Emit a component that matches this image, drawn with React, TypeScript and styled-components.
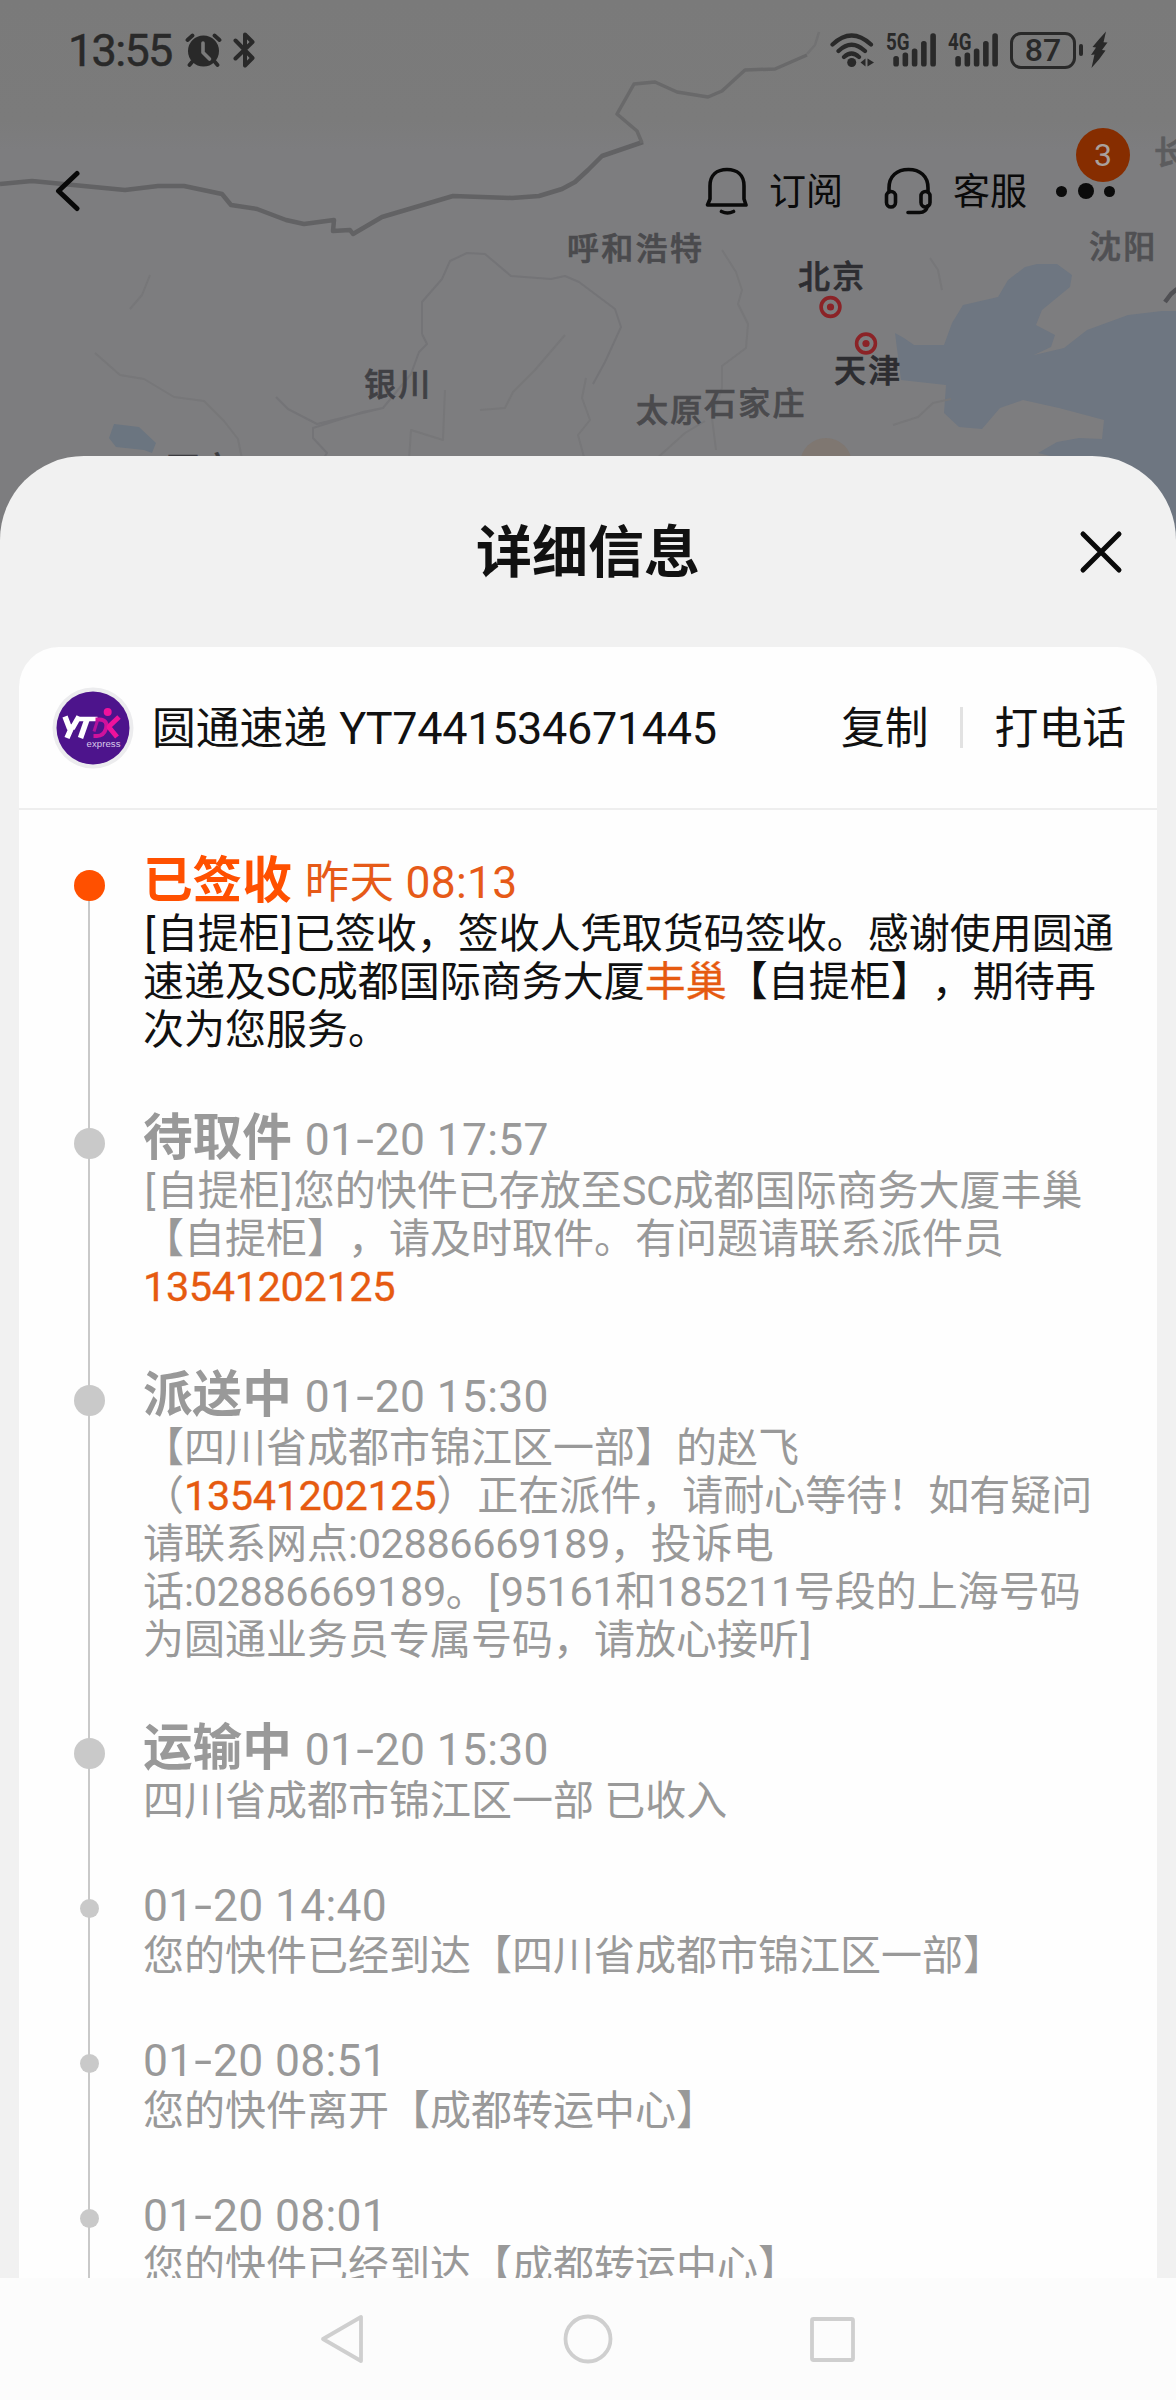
import React from "react";
import styled, { createGlobalStyle } from "styled-components";

const Global = createGlobalStyle`
  * { box-sizing: border-box; }
  html, body { margin: 0; padding: 0; background: #f1f1f1; }
  body {
    font-family: Roboto, "Noto Sans CJK SC", sans-serif;
    text-spacing-trim: space-all;
    text-autospace: no-autospace;
    font-kerning: none;
  }
`;

const Screen = styled.div`
  position: relative;
  display: flex;
  flex-direction: column;
  width: 1176px;
  height: 2400px;
  overflow: hidden;
  background: #7d7d7f;
`;

/* ---------- map backdrop ---------- */

const MapCanvas = styled.div`
  position: absolute;
  top: 0;
  left: 0;
  width: 1176px;
  height: 560px;
  overflow: hidden;
  background: linear-gradient(#7a7a7a 0, #7b7b7b 120px, #7d7d7f 150px);
`;

const MapArt = styled.svg`
  display: block;
`;

const City = styled.span<{ $x: number; $y: number; $color?: string }>`
  position: absolute;
  left: ${(p) => p.$x}px;
  top: ${(p) => p.$y - 20}px;
  line-height: 40px;
  font-size: 32px;
  letter-spacing: 2.3px;
  font-weight: 500;
  -webkit-text-stroke: 0.7px currentColor;
  white-space: nowrap;
  color: ${(p) => p.$color ?? "#4a4a4d"};
`;

/* ---------- status bar ---------- */

const StatusBar = styled.div`
  position: relative;
  display: flex;
  align-items: center;
  justify-content: space-between;
  height: 100px;
  padding: 0 66px 0 68px;
  color: #292929;
`;

const StatusGroup = styled.div<{ $gap: number }>`
  display: flex;
  align-items: center;
  gap: ${(p) => p.$gap}px;
`;

const Clock = styled.span`
  font-size: 45px;
  line-height: 50px;
  letter-spacing: -1.7px;
  margin: 2px 2px 0 0;
  -webkit-text-stroke: 0.5px currentColor;
`;

const Signal = styled.div`
  position: relative;
  width: 50px;
  height: 34px;
`;

const SignalLabel = styled.span`
  position: absolute;
  left: 0;
  top: -3px;
  font-size: 24px;
  line-height: 24px;
  font-weight: 700;
  transform: scaleX(0.78);
  transform-origin: left;
`;

const Battery = styled.div`
  display: flex;
  align-items: center;
  justify-content: center;
  width: 66px;
  height: 37px;
  border: 3px solid #292929;
  border-radius: 11px;
  font-size: 32px;
  line-height: 32px;
  font-weight: 500;
`;

const BatteryTip = styled.div`
  width: 4px;
  height: 12px;
  border-radius: 2px;
  background: #292929;
`;

/* ---------- app bar ---------- */

const AppBar = styled.div`
  position: relative;
  display: flex;
  align-items: center;
  height: 182px;
  padding: 0 61px 0 54px;
`;

const Spacer = styled.div`
  flex: 1;
`;

const BarLabel = styled.span<{ $right: number }>`
  margin: 3px ${(p) => p.$right}px 0 21px;
  font-size: 37px;
  line-height: 50px;
  color: #0a0a0a;
`;

const MoreButton = styled.div`
  position: relative;
  display: flex;
  align-items: center;
  justify-content: space-between;
  width: 59px;
`;

const MoreDot = styled.i<{ $d: number }>`
  width: ${(p) => p.$d}px;
  height: ${(p) => p.$d}px;
  border-radius: 50%;
  background: #0b0b0b;
`;

const Badge = styled.span`
  position: absolute;
  left: 20px;
  bottom: 17px;
  width: 54px;
  height: 54px;
  border-radius: 50%;
  background: #862d00;
  color: #a9a19d;
  font-size: 32px;
  line-height: 54px;
  text-align: center;
`;

/* ---------- sheet ---------- */

const Sheet = styled.section`
  position: relative;
  flex: 1;
  display: flex;
  flex-direction: column;
  min-height: 0;
  margin-top: 174px;
  padding: 0 19px;
  border-radius: 84px 84px 0 0;
  background: #f1f1f1;
`;

const SheetHeader = styled.header`
  display: grid;
  grid-template-columns: 1fr auto 1fr;
  align-items: center;
  flex: none;
  height: 191px;
  padding-right: 34px;
`;

const SheetTitle = styled.h1`
  grid-column: 2;
  margin: 3px 0 0 34px;
  font-size: 56px;
  line-height: 70px;
  font-weight: 700;
  color: #111;
`;

const CloseIcon = styled.svg`
  justify-self: end;
`;

const Card = styled.div`
  flex: 1;
  min-height: 0;
  overflow: hidden;
  border-radius: 40px 40px 0 0;
  background: #fefefe;
`;

const Courier = styled.div`
  display: flex;
  align-items: center;
  height: 163px;
  padding: 0 31px 0 33px;
  border-bottom: 2px solid #eee;
  font-size: 43.8px;
  line-height: 60px;
  color: #111;
`;

const CourierName = styled.span`
  margin: 3px 0 0 18px;
`;

const TrackingNo = styled.span`
  margin: 3px 0 0 12px;
  font-size: 45px;
  letter-spacing: -0.35px;
`;

const Action = styled.span`
  margin-top: 3px;
`;

const Divider = styled.i`
  width: 3px;
  height: 41px;
  margin: 0 32px 0 31px;
  background: #e2e2e2;
`;

/* ---------- timeline ---------- */

const Timeline = styled.ol`
  list-style: none;
  margin: 0;
  padding: 34px 0 0 54px;
`;

const Event = styled.li`
  display: flex;
`;

const Rail = styled.div<{ $first?: boolean }>`
  display: flex;
  flex-direction: column;
  align-items: center;
  flex: none;
  width: 33px;
  margin-right: 37px;
  background: linear-gradient(#c9c9c9, #c9c9c9) 15px ${(p) => (p.$first ? "42px" : "0")} / 2px 100% no-repeat;
`;

const Dot = styled.i<{ $big: boolean; $active?: boolean }>`
  width: ${(p) => (p.$big ? 31 : 19)}px;
  height: ${(p) => (p.$big ? 31 : 19)}px;
  margin-top: ${(p) => (p.$active ? 26 : 27)}px;
  border-radius: 50%;
  background: ${(p) => (p.$active ? "#ff5000" : "#c9c9c9")};
`;

const EventBody = styled.div<{ $active?: boolean }>`
  padding-bottom: 47px;
  color: ${(p) => (p.$active ? "#111" : "#999")};
`;

const EventHead = styled.div<{ $big: boolean }>`
  display: flex;
  align-items: baseline;
  height: ${(p) => (p.$big ? 66 : 60)}px;
  line-height: ${(p) => (p.$big ? 74 : 68)}px;
  white-space: nowrap;
`;

const Status = styled.strong<{ $active?: boolean }>`
  margin-right: 13px;
  font-size: 49.6px;
  font-weight: 700;
  color: ${(p) => (p.$active ? "#ff5000" : "#999")};
`;

const Time = styled.time<{ $active?: boolean }>`
  font-size: 44.4px;
  letter-spacing: 0.3px;
  color: ${(p) => (p.$active ? "#e65a18" : "#999")};
`;

const Dash = styled.span`
  display: inline-block;
  transform: scaleX(1.45);
  margin: 0 3.5px;
`;

const Line = styled.p`
  margin: 0;
  height: 48px;
  font-size: 41px;
  line-height: 48px;
  white-space: nowrap;
`;

const Latin = styled.span`
  font-size: 41.5px;
  letter-spacing: -0.4px;
`;

const Bracket = styled.span`
  padding: 0 1.5px;
`;

const Mark = styled.span`
  color: #e65a10;
  -webkit-text-stroke: 0.3px currentColor;
`;

/* ---------- navigation bar ---------- */

const NavBar = styled.nav`
  position: relative;
  display: flex;
  align-items: center;
  justify-content: center;
  gap: 194px;
  flex: none;
  height: 122px;
  background: #fcfcfc;
`;

const NavIcon = styled.svg`
  fill: none;
  stroke: #cfcfcf;
  stroke-width: 3.8;
  stroke-linejoin: round;
`;

/* Splits a run into CJK text, brackets and Latin/digit runs. */
function Run({ text }: { text: string }) {
  return (
    <>
      {text.split(/([A-Za-z0-9:]+|[[\]])/).map((part, i) => {
        if (part === "[" || part === "]") return <Bracket key={i}>{part}</Bracket>;
        if (/^[A-Za-z0-9:]+$/.test(part)) return <Latin key={i}>{part}</Latin>;
        return part;
      })}
    </>
  );
}

/* Text between asterisks is highlighted. */
function RichLine({ text }: { text: string }) {
  return (
    <Line>
      {text.split("*").map((part, i) =>
        i % 2 ? (
          <Mark key={i}>
            <Run text={part} />
          </Mark>
        ) : (
          <Run key={i} text={part} />
        )
      )}
    </Line>
  );
}

function TimeText({ text, active }: { text: string; active?: boolean }) {
  const [before, after] = text.split("-");
  return (
    <Time $active={active}>
      {before}
      {after !== undefined && (
        <>
          <Dash>-</Dash>
          {after}
        </>
      )}
    </Time>
  );
}

interface TrackEvent {
  status?: string;
  time: string;
  lines: string[];
  active?: boolean;
}

const events: TrackEvent[] = [
  {
    status: "已签收",
    time: "昨天 08:13",
    active: true,
    lines: [
      "[自提柜]已签收，签收人凭取货码签收。感谢使用圆通",
      "速递及SC成都国际商务大厦*丰巢*【自提柜】，期待再",
      "次为您服务。",
    ],
  },
  {
    status: "待取件",
    time: "01-20 17:57",
    lines: [
      "[自提柜]您的快件已存放至SC成都国际商务大厦丰巢",
      "【自提柜】，请及时取件。有问题请联系派件员",
      "*13541202125*",
    ],
  },
  {
    status: "派送中",
    time: "01-20 15:30",
    lines: [
      "【四川省成都市锦江区一部】的赵飞",
      "（*13541202125*）正在派件，请耐心等待！如有疑问",
      "请联系网点:02886669189，投诉电",
      "话:02886669189。[95161和185211号段的上海号码",
      "为圆通业务员专属号码，请放心接听]",
    ],
  },
  { status: "运输中", time: "01-20 15:30", lines: ["四川省成都市锦江区一部 已收入"] },
  { time: "01-20 14:40", lines: ["您的快件已经到达【四川省成都市锦江区一部】"] },
  { time: "01-20 08:51", lines: ["您的快件离开【成都转运中心】"] },
  { time: "01-20 08:01", lines: ["您的快件已经到达【成都转运中心】"] },
];

const cities = [
  { name: "呼和浩特", x: 567, y: 249 },
  { name: "北京", x: 798, y: 277, color: "#2d2d31" },
  { name: "天津", x: 834, y: 371, color: "#2d2d31" },
  { name: "太原", x: 636, y: 411 },
  { name: "石家庄", x: 704, y: 404 },
  { name: "银川", x: 364, y: 385, color: "#404044" },
  { name: "沈阳", x: 1089, y: 247, color: "#505053" },
  { name: "长", x: 1154, y: 153, color: "#5c5c5e" },
  { name: "西宁", x: 167, y: 469, color: "#3c3c40" },
];

function MapBackdrop() {
  return (
    <MapCanvas>
      <MapArt width="1176" height="560" viewBox="0 0 1176 560" fill="none">
        <g fill="#6e7681">
          <path d="M895 333l9 5 10 7h30l8-22 11-18 35-8 10-17 17-13 12-3h20l15 11-2 12-28 23-6 15 19 10-4 12-17 8 30-7 23-18 41-15 34-4h14v249h-30v-80l-108-27 19-11 22-4 23 1 2-19-45-12-36-8-23 8-18 21-23-2-15-14 2-28-45-5z" />
          <path fill="#6b7580" d="M114 424l25 3 17 16-4 10-8-3-28-3-7-9z" />
        </g>
        <circle cx="826" cy="464" r="26" fill="#7f7771" />
        <g stroke="#626264" strokeWidth="4.5" strokeLinejoin="round">
          <path d="M0 184l32-3 93 9 33-4h26l38 8 9 11 26 4 29 11 18 4 30-4-1 11 17-1 3 4 29-17 71-21 59 2 27-2 23-7 13-7 13-12 14-14 41-14" />
          <path stroke="#69696a" strokeWidth="3.5" d="M642 143l-5-12-20-17 17-30 21-2 22 10 31 5 14-6 23-21 30-1 32-14" />
          <path stroke="#727273" strokeWidth="2.5" d="M807 54l8-9 4-13" />
          <path stroke="#505054" d="M1165 302l6-8 6-5" />
        </g>
        <g stroke="#747477" strokeWidth="2" strokeLinejoin="round">
          <path d="M422 334v-32l20-23 8-18 17-8 18 1 26 22 40 3 14-3 14 6 20 15 16 12 6 18-16 35-12 22M422 334l5 10-8 8-8 22-28 34-66 16-29-15-12-12M383 408l-20 4-50 16v10l14 15-5 8" />
          <path stroke="#777779" d="M722 250l14 22 6 18-4 14 10 20-2 24-24 18 0 22-10 30 4 32M893 425l25-8 15-14 18-4M586 378l-4 20 8 22-12 15 6 22" />
          <path stroke="#777779" d="M95 353l25 22 24 4 30 18 30 4 20 20 14 18 4 20M150 275l-8 20-12 14M445 390l-2 50-32-10-2 30M565 335l-30 35-22 22-8 16-25 2M930 258l8 12 4 20M655 460l30-27 20-12" />
        </g>
        <g stroke="#8b2327" strokeWidth="3.6">
          <circle cx="830.5" cy="307" r="9.4" />
          <circle cx="866" cy="343.5" r="9.4" />
        </g>
        <g fill="#8b2327">
          <circle cx="830.5" cy="307" r="3.6" />
          <circle cx="866" cy="343.5" r="3.6" />
        </g>
      </MapArt>
      {cities.map((c) => (
        <City key={c.name} $x={c.x} $y={c.y} $color={c.color}>
          {c.name}
        </City>
      ))}
    </MapCanvas>
  );
}

function SignalBars({ label }: { label: string }) {
  const tops = [23, 19.5, 15.5, 8, 0.3];
  return (
    <Signal>
      <SignalLabel>{label}</SignalLabel>
      <svg width="50" height="34" viewBox="0 0 50 34" fill="currentColor">
        {tops.map((t, i) => (
          <rect key={i} x={7.3 + i * 9.25} y={t} width="5.6" height={33.6 - t} rx="2.6" />
        ))}
      </svg>
    </Signal>
  );
}

function CourierLogo() {
  return (
    <svg width="82" height="82" viewBox="0 0 82 82">
      <circle cx="41" cy="41" r="40.5" fill="#ececee" />
      <circle cx="41" cy="41" r="36.5" fill="#4d148c" />
      <g fill="none" stroke="#fff" strokeWidth="5.5">
        <path d="M13 29.500l4 10.500h4l6-10.500M20.500 38.500L15 51" />
        <path strokeWidth="4.500" d="M24 32h21.500" />
        <path d="M35.500 31l-7 20" />
      </g>
      <circle cx="55.700" cy="25" r="4" fill="#f0129c" />
      <g fill="none" stroke="#f0129c" strokeLinejoin="round">
        <path strokeWidth="4" stroke="#d0129c" d="M43.500 32.500h4c6 0 8 4 6.500 9-1.500 5-4 7.500-9 7.500h-3.500" />
        <path strokeWidth="3" stroke="#b3129c" d="M45.500 33.500l-3.500 11" />
        <path strokeWidth="5" d="M67 30l-9 8.500c-1 1-1 2 0 3l7 8.500" />
      </g>
      <text x="34.500" y="60" fontFamily="Liberation Sans, sans-serif" fontSize="9.600" fill="#d9c9ea" textLength="34">
        express
      </text>
    </svg>
  );
}

export default function App() {
  return (
    <>
      <Global />
      <Screen>
        <MapBackdrop />

        <StatusBar>
          <StatusGroup $gap={11}>
            <Clock>13:55</Clock>
            <svg width="37" height="34" viewBox="0 0 37 34" fill="none" stroke="currentColor" strokeLinecap="round">
              <circle cx="18.500" cy="18" r="15.500" fill="currentColor" stroke="none" />
              <path strokeWidth="3.800" d="M2.500 7l5-4.500M34.500 7l-5-4.500M7 29l-2.500 3M30 29l2.500 3" />
              <path stroke="#7a7a7a" strokeWidth="3.600" strokeLinejoin="round" d="M18 10v9.500l6.500 6.500" />
            </svg>
            <svg width="23" height="36" viewBox="0 0 23 36" fill="none" stroke="currentColor" strokeWidth="4" strokeLinecap="round" strokeLinejoin="round">
              <path d="M2.500 8.500L19.500 26 12 33.500V22M12 14V2.500l7.500 7.500L2.500 26.500" />
            </svg>
          </StatusGroup>
          <StatusGroup $gap={12}>
            <svg width="44" height="35" viewBox="0 0 44 35" fill="none" stroke="currentColor" strokeLinecap="round" strokeWidth="4.200">
              <path d="M2.500 11.500Q21.500-6.500 41 11.500M8.500 18Q21.500 5.500 35 18M14 24q7.500-7 15 0" />
              <circle cx="21.700" cy="29.500" r="4.500" fill="currentColor" stroke="none" />
              <path fill="currentColor" stroke="none" d="M30.500 29.500l5-4v8zM37.500 25.500l6.500 4-6.500 4z" />
            </svg>
            <SignalBars label="5G" />
            <SignalBars label="4G" />
            <StatusGroup $gap={3}>
              <Battery>87</Battery>
              <BatteryTip />
              <svg width="24" height="38" viewBox="0 0 24 38" fill="currentColor">
                <path d="M20 .5Q13 8 6.500 16l3.500.5L5 24l3.500-.5L5.500 37Q14 28 19.500 19.500l-3.500-.5 5.500-7.500-4-.2z" />
              </svg>
            </StatusGroup>
          </StatusGroup>
        </StatusBar>

        <AppBar>
          <svg width="28" height="42" viewBox="0 0 28 42" fill="none" stroke="#080808" strokeWidth="5" strokeLinecap="round" strokeLinejoin="round">
            <path d="M23 3.500L4.500 21 23 38.500" />
          </svg>
          <Spacer />
          <svg width="43" height="48" viewBox="0 0 43 48" fill="none" stroke="#0a0a0a" strokeWidth="3.600" strokeLinecap="round" strokeLinejoin="round">
            <path d="M5 32V19C5 8 12 2.500 22 2.500S39 8 39 19v13l2 6H2.500zM16.500 44.500q6 3 12 0" />
          </svg>
          <BarLabel $right={41}>订阅</BarLabel>
          <svg width="48" height="48" viewBox="0 0 48 48" fill="none" stroke="#0a0a0a" strokeWidth="3.600" strokeLinecap="round">
            <path d="M5 25V21C5 9 13 2.500 24.500 2.500S44 9 44 21v4M43.500 39c-1 5-4 6.500-8 6.500H24" />
            <rect x="2.500" y="24.500" width="9" height="15.500" rx="4.500" />
            <rect x="37" y="24.500" width="9" height="15.500" rx="4.500" />
          </svg>
          <BarLabel $right={29}>客服</BarLabel>
          <MoreButton>
            <MoreDot $d={11} />
            <MoreDot $d={16} />
            <MoreDot $d={11} />
            <Badge>3</Badge>
          </MoreButton>
        </AppBar>

        <Sheet>
          <SheetHeader>
            <SheetTitle>详细信息</SheetTitle>
            <CloseIcon width="44" height="44" viewBox="0 0 44 44" fill="none" stroke="#0a0a0a" strokeWidth="5" strokeLinecap="round">
              <path d="M4 4l36 36M40 4L4 40" />
            </CloseIcon>
          </SheetHeader>
          <Card>
            <Courier>
              <CourierLogo />
              <CourierName>圆通速递</CourierName>
              <TrackingNo>YT7441534671445</TrackingNo>
              <Spacer />
              <Action>复制</Action>
              <Divider />
              <Action>打电话</Action>
            </Courier>
            <Timeline>
              {events.map((e, i) => (
                <Event key={i}>
                  <Rail $first={i === 0}>
                    <Dot $big={!!e.status} $active={e.active} />
                  </Rail>
                  <EventBody $active={e.active}>
                    <EventHead $big={!!e.status}>
                      {e.status && <Status $active={e.active}>{e.status}</Status>}
                      <TimeText text={e.time} active={e.active} />
                    </EventHead>
                    {e.lines.map((l) => (
                      <RichLine key={l} text={l} />
                    ))}
                  </EventBody>
                </Event>
              ))}
            </Timeline>
          </Card>
        </Sheet>

        <NavBar>
          <NavIcon width="50" height="50" viewBox="0 0 50 50">
            <path d="M42 3v44L4 25z" />
          </NavIcon>
          <NavIcon width="50" height="50" viewBox="0 0 50 50">
            <circle cx="25" cy="25" r="22.500" />
          </NavIcon>
          <NavIcon width="50" height="50" viewBox="0 0 50 50">
            <rect x="5" y="5" width="41" height="41" rx="1.500" />
          </NavIcon>
        </NavBar>
      </Screen>
    </>
  );
}
